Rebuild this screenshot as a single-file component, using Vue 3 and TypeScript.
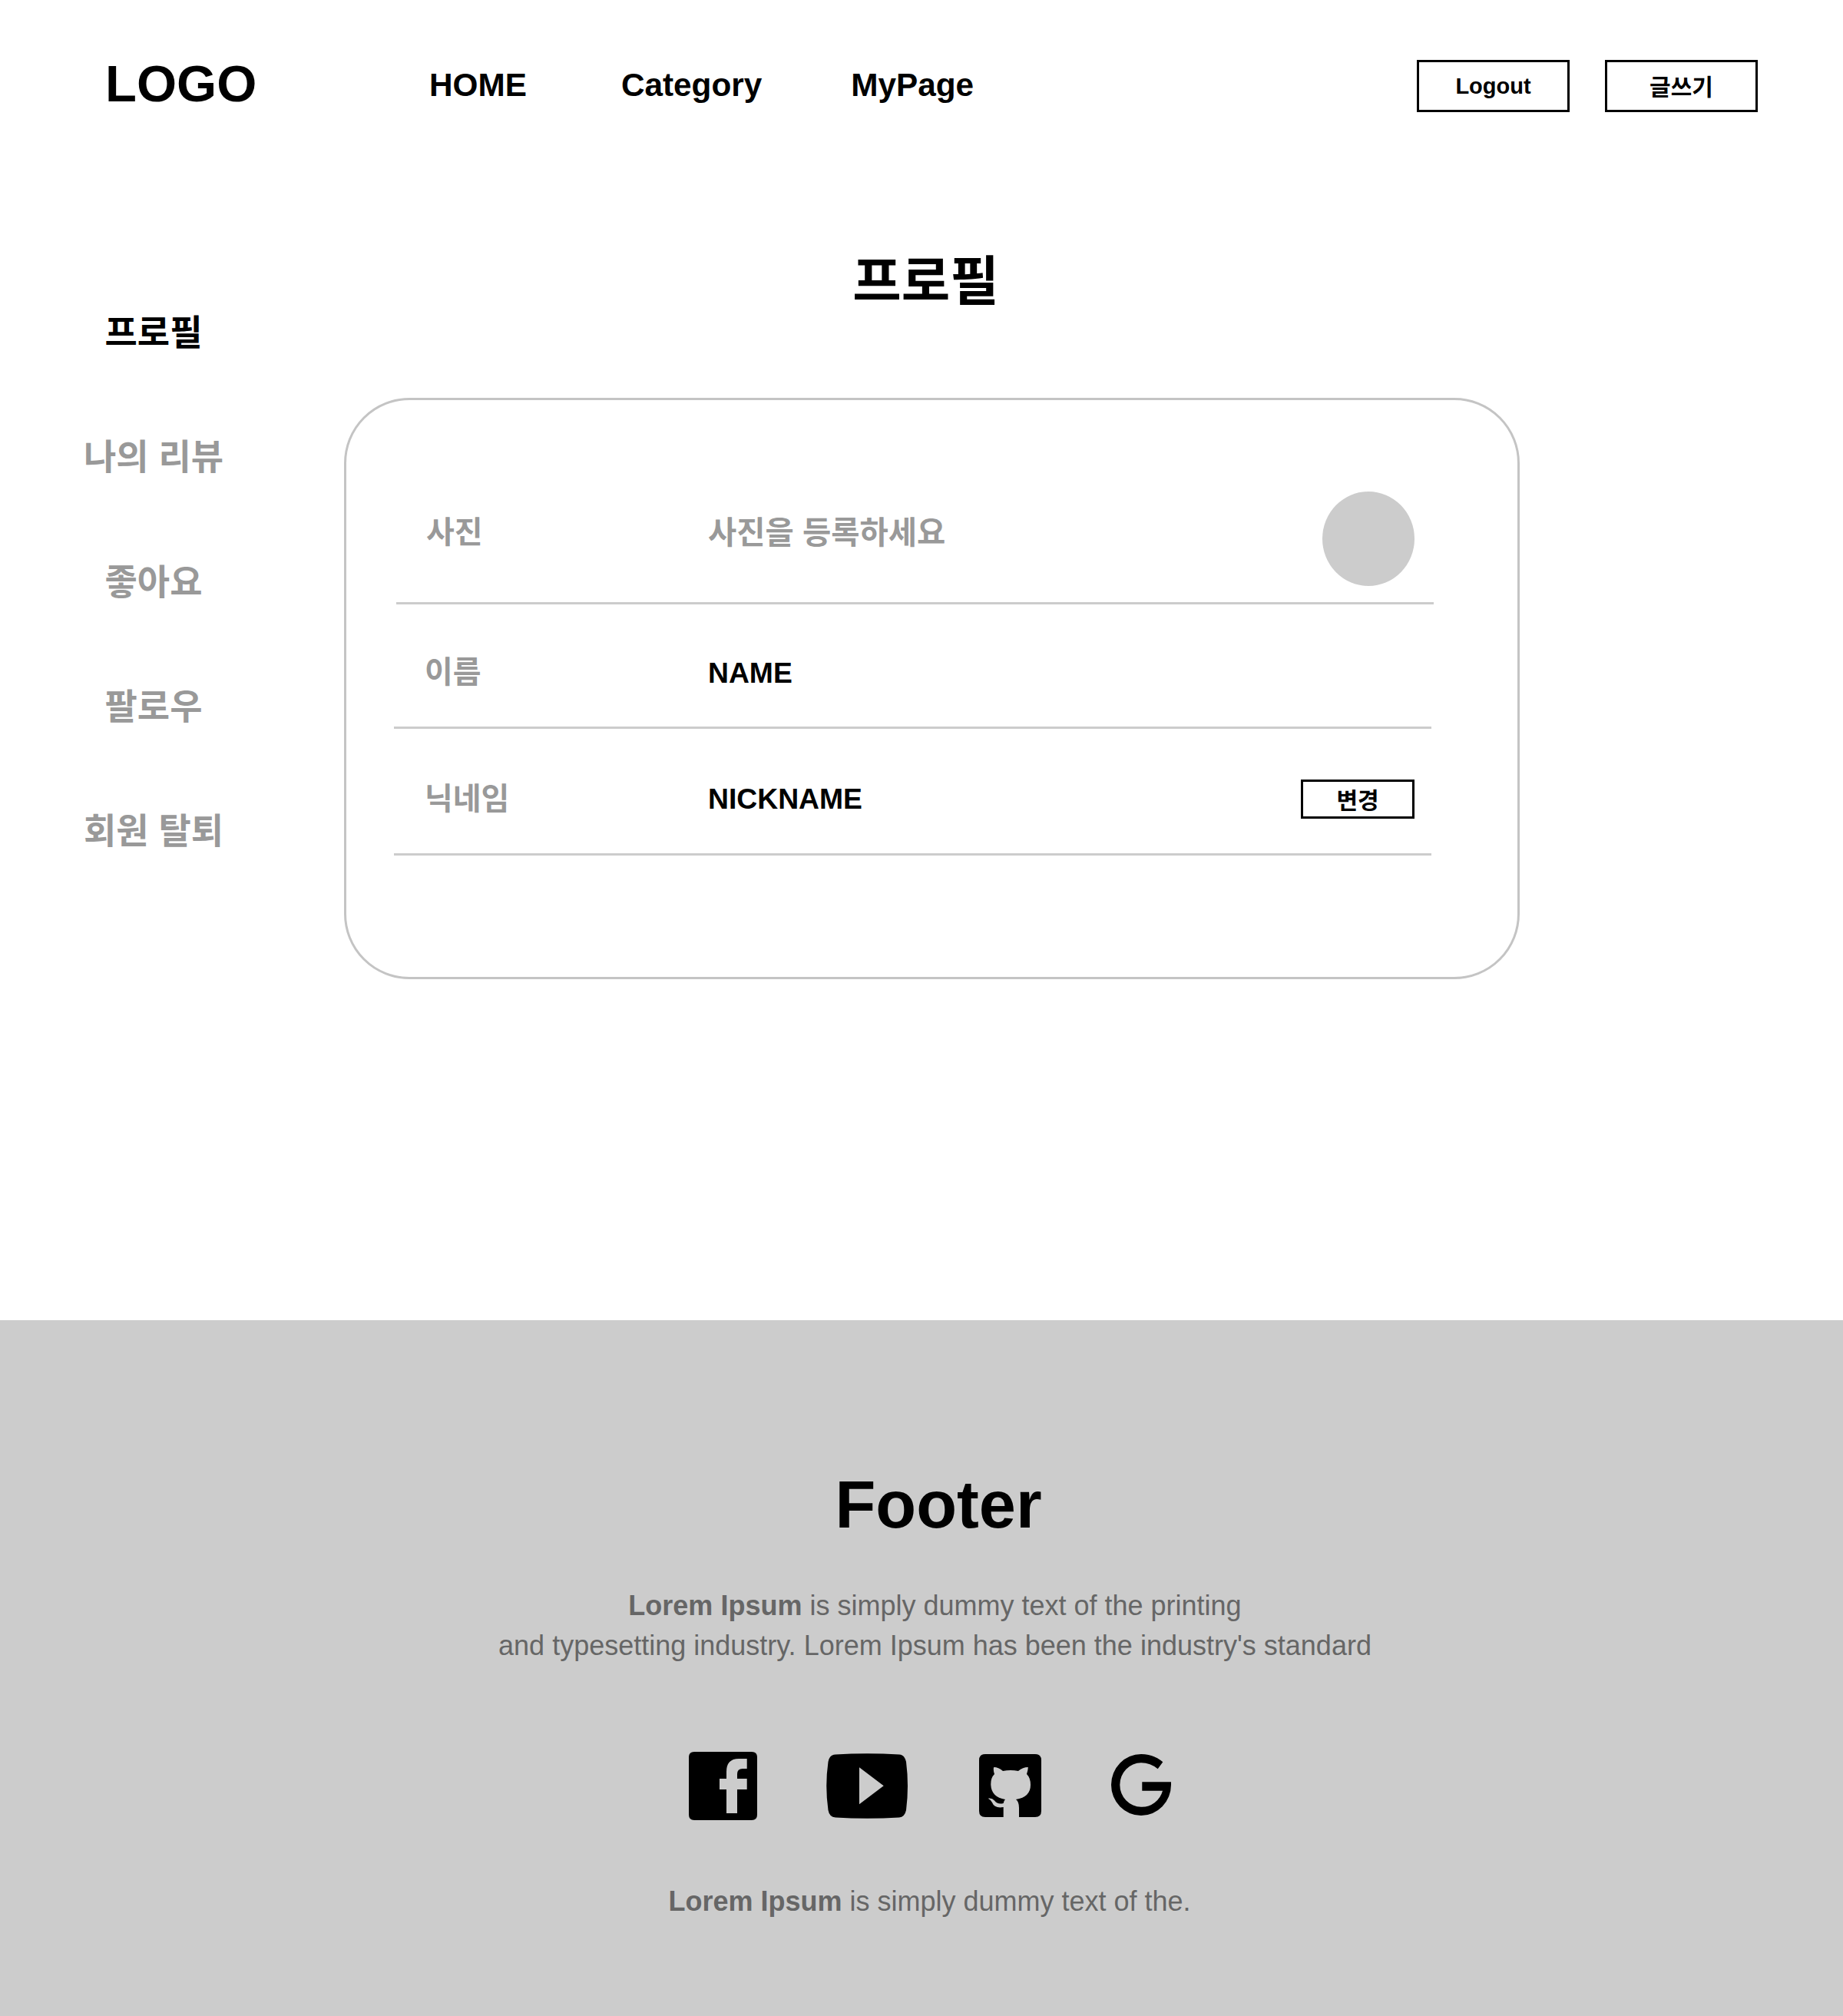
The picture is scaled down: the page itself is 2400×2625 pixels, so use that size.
<script setup lang="ts">
const sideItems = ['프로필', '나의 리뷰', '좋아요', '팔로우', '회원 탈퇴'];
</script>

<template>
  <div class="page">
    <header class="top">
      <div class="logo">LOGO</div>
      <nav class="nav">
        <a class="nav-link home">HOME</a>
        <a class="nav-link cat">Category</a>
        <a class="nav-link my">MyPage</a>
      </nav>
      <div class="top-btns">
        <button class="box-btn latin">Logout</button>
        <button class="box-btn">글쓰기</button>
      </div>
    </header>

    <main class="main">
      <aside class="side">
        <a v-for="(item, i) in sideItems" :key="item" class="side-item" :class="{ active: i === 0 }">{{ item }}</a>
      </aside>
      <section class="content">
        <h1 class="title">프로필</h1>
        <div class="card">
          <div class="row row-photo">
            <span class="label">사진</span>
            <span class="hint">사진을 등록하세요</span>
            <span class="avatar"></span>
          </div>
          <div class="row row-name">
            <span class="label">이름</span>
            <span class="value">NAME</span>
          </div>
          <div class="row row-nick">
            <span class="label">닉네임</span>
            <span class="value">NICKNAME</span>
            <button class="change-btn">변경</button>
          </div>
        </div>
      </section>
    </main>

    <footer class="foot">
      <h2 class="foot-title">Footer</h2>
      <p class="foot-text"><b>Lorem Ipsum</b> is simply dummy text of the printing<br />and typesetting industry. Lorem Ipsum has been the industry's standard</p>
      <div class="icons">
        <svg class="ic-fb" viewBox="0 0 89 89">
          <path fill-rule="evenodd" d="M7 0H82Q89 0 89 7V82Q89 89 82 89H7Q0 89 0 82V7Q0 0 7 0ZM49 80H63V49H75.7V35H63V29Q63 22 70 22H75.7V9H65Q49 9 49 26V35H40V49H49Z" />
        </svg>
        <svg class="ic-yt" viewBox="0 0 107 85">
          <path fill-rule="evenodd" d="M12 1.5Q53 -1 95 1.5Q102 2 104 11Q108 42.5 104 74Q102 83 95 83.5Q53 86 12 83.5Q4 83 2.5 74Q-2 42.5 2.5 11Q4 2 12 1.5ZM43 18.3V66.3L74.7 42.3Z" />
        </svg>
        <svg class="ic-gh" viewBox="0 0 81 82">
          <path d="M8 0H73Q81 0 81 8V74Q81 82 73 82H52V70Q52 62 48 59Q67 56 67 40Q67 31 62 26Q64 20 63.7 17Q57 17 51 22Q41 20 31 22Q25 17 19.3 17Q18 20 20 26Q15 31 15.3 40Q16 56 34 59Q32 61 31.7 64Q24 66 20 60.5Q17 57 11.7 57.7Q15 59 17 63Q20 71 31.7 69V82H8Q0 82 0 74V8Q0 0 8 0Z" />
        </svg>
        <svg class="ic-g" viewBox="0 0 78 80">
          <path d="M67.3 10.3Q55 0 39 0A39 40 0 0 0 39 80A39 40 0 0 0 78 40V36.3H40.3V47.7H67A28 28.7 0 0 1 39 68.7A27.7 28.7 0 0 1 39 11.3Q51 11.3 60.7 19.3Z" />
        </svg>
      </div>
      <p class="foot-copy"><b>Lorem Ipsum</b> is simply dummy text of the.</p>
    </footer>
  </div>
</template>

<style>
html,
body {
  margin: 0;
  background: #fff;
}
</style>

<style scoped>
.page {
  width: 2400px;
  font-family: 'Liberation Sans', 'Noto Sans CJK KR', sans-serif;
  color: #000;
}
.top {
  height: 220px;
  display: flex;
  align-items: flex-start;
  padding: 0 111px 0 137px;
  box-sizing: border-box;
}
.logo {
  font-size: 67px;
  font-weight: 700;
  line-height: 77px;
  margin-top: 70px;
  width: 422px;
}
.nav {
  display: flex;
  flex: 1;
  margin-top: 87px;
}
.nav-link {
  font-size: 42.3px;
  font-weight: 700;
  line-height: 48px;
}
.cat {
  margin-left: 123px;
}
.my {
  margin-left: 116px;
}
.top-btns {
  display: flex;
  gap: 46px;
  margin-top: 78px;
}
.box-btn {
  width: 199px;
  height: 68px;
  border: 3px solid #000;
  background: #fff;
  font: 700 30px 'Liberation Sans', 'Noto Sans CJK KR', sans-serif;
  color: #000;
  padding: 0 0 3px;
}
.box-btn.latin {
  font-size: 29px;
  padding: 0;
}
.main {
  display: flex;
  height: 1499px;
}
.side {
  width: 400px;
  padding-top: 180px;
  display: flex;
  flex-direction: column;
  align-items: center;
  gap: 95.3px;
  box-sizing: border-box;
}
.side-item {
  font-size: 46px;
  font-weight: 700;
  line-height: 67px;
  color: #999;
}
.side-item.active {
  color: #000;
}
.content {
  width: 1531px;
  margin-left: 48px;
  display: flex;
  flex-direction: column;
  align-items: center;
}
.title {
  margin: 99px 16px 0 0;
  font-size: 69px;
  line-height: 98px;
  font-weight: 700;
}
.card {
  margin-top: 101px;
  width: 1531px;
  height: 757px;
  box-sizing: border-box;
  border: 3px solid #c4c4c4;
  border-radius: 85px;
  padding: 0 0 0 62px;
}
.row {
  display: flex;
  align-items: center;
  width: 1351px;
  border-bottom: 3px solid #ccc;
  box-sizing: border-box;
  padding-left: 40px;
  padding-top: 20px;
}
.row-photo {
  height: 266px;
  margin-left: 3px;
  padding-left: 39px;
  padding-top: 98px;
}
.row-name {
  height: 162px;
}
.row-nick {
  height: 165px;
}
.label {
  width: 369px;
  flex: none;
  font-size: 40px;
  font-weight: 700;
  color: #999;
  margin-bottom: 10px;
}
.row-nick .label {
  margin-bottom: 7px;
}
.row-photo .label {
  width: 367px;
  margin-bottom: 24px;
}
.hint {
  font-size: 40.5px;
  font-weight: 700;
  color: #999;
  flex: 1;
  margin-bottom: 22px;
}
.value {
  font-size: 37.3px;
  font-weight: 700;
  flex: 1;
}
.avatar {
  width: 120px;
  height: 123px;
  border-radius: 50%;
  background: #ccc;
  margin-right: 25px;
}
.change-btn {
  width: 148px;
  height: 51px;
  border: 3px solid #000;
  background: #fff;
  font: 700 30px 'Liberation Sans', 'Noto Sans CJK KR', sans-serif;
  color: #000;
  padding: 0 0 3px;
  margin-right: 22px;
}
.foot {
  height: 906px;
  background: #ccc;
  box-sizing: border-box;
  display: flex;
  flex-direction: column;
  align-items: center;
  padding-top: 191px;
}
.foot-title {
  margin: 0 0 0 44px;
  font-size: 86.5px;
  line-height: 99px;
  font-weight: 700;
}
.foot-text {
  margin: 56px 0 0 35px;
  font-size: 36px;
  line-height: 52px;
  color: #666;
  text-align: center;
}
.icons {
  display: flex;
  align-items: center;
  margin: 111px 0 0 22px;
  height: 90px;
}
.icons svg {
  fill: #000;
  flex: none;
}
.ic-fb {
  width: 89px;
  height: 89px;
}
.ic-yt {
  width: 107px;
  height: 85px;
  margin-left: 90px;
}
.ic-gh {
  width: 81px;
  height: 82px;
  margin-left: 92px;
}
.ic-g {
  width: 78px;
  height: 80px;
  margin-left: 91px;
  margin-bottom: 3px;
}
.foot-copy {
  margin: 80px 0 0 21px;
  font-size: 36px;
  line-height: 52px;
  color: #666;
}
</style>
